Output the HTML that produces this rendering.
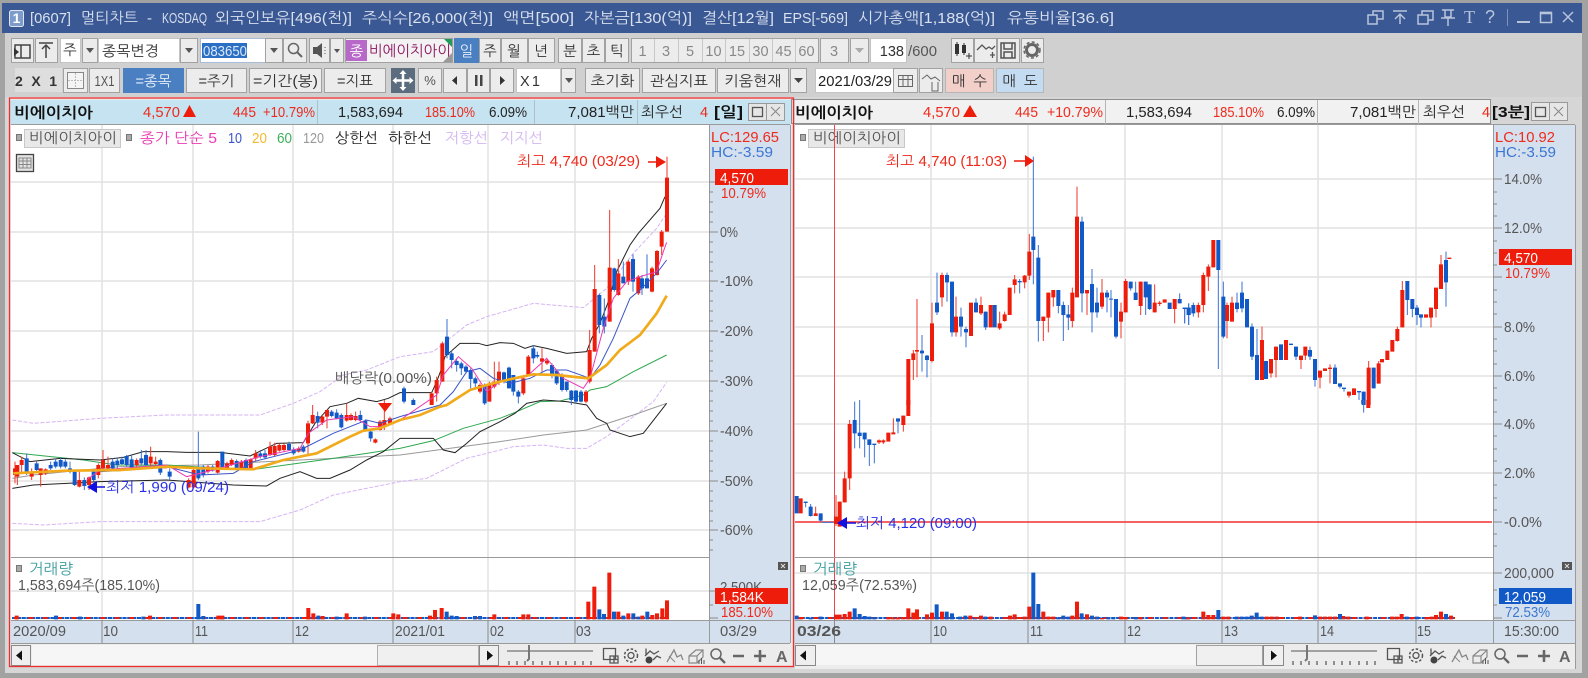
<!DOCTYPE html>
<html lang="ko"><head><meta charset="utf-8"><title>멀티차트</title>
<style>
html,body{margin:0;padding:0;background:#d6d6d6;overflow:hidden}
svg{display:block;filter:blur(.35px)}
text{font-family:"Liberation Sans","NanumGothic","Noto Sans CJK KR",sans-serif;font-size:14.5px;fill:#333}
.c{text-anchor:middle}
.b{fill:#ececec;stroke:#a2a2a2}
.w{fill:#fff;stroke:#c4c4c4}
.tt{fill:#d9e0ee;font-size:15px}
.r{fill:#ee2a1c}.bl{fill:#1f5fd0}.k{fill:#222}.g{fill:#555}.dg{fill:#888}
.bd{font-weight:bold;fill:#111}
.i{fill:none;stroke:#555;stroke-width:1.3}
.ti{fill:none;stroke:#b8c4dc;stroke-width:1.5}
.rw{stroke:#ee3a2a;stroke-width:3;fill:none}.rb{stroke:#ee1c0a;stroke-width:12;fill:none}
.uw{stroke:#3a72d4;stroke-width:3;fill:none}.ub{stroke:#1259c8;stroke-width:12;fill:none}
.l{fill:none;stroke-width:3}
.gr{stroke:#e2e2e2;stroke-width:1.5;fill:none}
.ax{stroke:#8a8a8a;stroke-width:1;fill:none}
</style></head><body>
<svg xmlns="http://www.w3.org/2000/svg" width="1588" height="678" viewBox="0 0 1588 678">
<rect width="1588" height="678" fill="#d6d6d6"/>
<rect x="0" y="0" width="5" height="678" fill="#a2a2a2"/>
<rect x="1582" y="0" width="6" height="678" fill="#a2a2a2"/>
<rect x="0" y="0" width="1588" height="3" fill="#a2a2a2"/>
<rect x="0" y="673" width="1588" height="5" fill="#a2a2a2"/>
<rect x="5" y="33" width="1577" height="64" fill="#d0d0d0"/>
<!-- title -->
<rect x="2" y="3" width="1580" height="30" fill="#3a5894"/>
<rect x="9.5" y="10.500" width="14" height="16" rx="2" fill="#7d9ccb" stroke="#dfe6f2"/>
<text x="16.500" y="23" class="c" style="fill:#fff;font-size:14px;font-weight:bold">1</text>
<text x="30" y="23" class="tt" textLength="41" lengthAdjust="spacingAndGlyphs">[0607]</text>
<text x="81" y="23" class="tt" textLength="57" lengthAdjust="spacingAndGlyphs">멀티차트</text>
<text x="147" y="23" class="tt">-</text>
<text x="162" y="23" class="tt" textLength="45" lengthAdjust="spacingAndGlyphs">KOSDAQ</text>
<text x="215" y="23" class="tt" textLength="137" lengthAdjust="spacingAndGlyphs">외국인보유[496(천)]</text>
<text x="362" y="23" class="tt" textLength="131" lengthAdjust="spacingAndGlyphs">주식수[26,000(천)]</text>
<text x="503" y="23" class="tt" textLength="71" lengthAdjust="spacingAndGlyphs">액면[500]</text>
<text x="584" y="23" class="tt" textLength="108" lengthAdjust="spacingAndGlyphs">자본금[130(억)]</text>
<text x="702" y="23" class="tt" textLength="72" lengthAdjust="spacingAndGlyphs">결산[12월]</text>
<text x="783" y="23" class="tt" textLength="65" lengthAdjust="spacingAndGlyphs">EPS[-569]</text>
<text x="858" y="23" class="tt" textLength="137" lengthAdjust="spacingAndGlyphs">시가총액[1,188(억)]</text>
<text x="1007" y="23" class="tt" textLength="107" lengthAdjust="spacingAndGlyphs">유통비율[36.6]</text>
<path class="ti" d="M1368 15h9v9h-9zM1373 15v-4h10v8h-6M1393 11h14M1400 24v-9M1395 19l5-5 5 5M1418 15h10v9h-10zM1422 15v-4h11v9h-5M1442 10h12M1445 10v7h6v-7M1441 18h14M1448 18v8"/>
<text x="1464" y="23" style="fill:#b8c4dc;font-size:18px;font-family:'Liberation Serif',serif">T</text>
<text x="1485" y="23" style="fill:#b8c4dc;font-size:18px">?</text>
<path d="M1507.500 9v17" stroke="#7f93ba" fill="none"/>
<path d="M1517 22h13" stroke="#b8c4dc" stroke-width="2" fill="none"/>
<rect x="1540.500" y="12.500" width="11" height="10" fill="none" stroke="#b8c4dc" stroke-width="1.500"/><path d="M1540 13h12" stroke="#b8c4dc" stroke-width="2.500"/>
<path class="ti" d="M1563 12l10 10M1573 12l-10 10"/>

<!-- toolbar row 1 -->
<rect class="b" x="11.500" y="38.500" width="22" height="24"/><rect class="b" x="35.500" y="38.500" width="22" height="24"/>
<path d="M15 45h15v13h-15zM21 45v13" fill="none" stroke="#444" stroke-width="1.500"/><path d="M14 48l5 4-5 4z" fill="#333"/>
<path d="M39 43h14M46 58v-13M42 49l4-4 4 4" fill="none" stroke="#444" stroke-width="1.500"/>
<rect class="w" x="60.500" y="38.500" width="20" height="24"/><text x="70" y="55" class="c">주</text>
<rect class="b" x="82.500" y="38.500" width="15" height="24"/><path d="M86 48h8l-4 5z" fill="#555"/>
<rect class="w" x="98.500" y="38.500" width="81" height="24"/><text x="102" y="56" textLength="57" lengthAdjust="spacingAndGlyphs">종목변경</text>
<rect class="b" x="180.500" y="38.500" width="17" height="24"/><path d="M185 48h8l-4 5z" fill="#555"/>
<rect x="200.500" y="38.500" width="65" height="24" fill="#fff" stroke="#a8bbd8"/>
<rect x="202" y="43" width="45" height="15" fill="#2a6fc4"/>
<text x="203" y="56" style="fill:#dbe8f8" textLength="44" lengthAdjust="spacingAndGlyphs">083650</text>
<rect class="b" x="265.500" y="38.500" width="17" height="24"/><path d="M270 48h8l-4 5z" fill="#555"/>
<rect class="b" x="283.500" y="38.500" width="23" height="24"/><circle cx="293.500" cy="48.500" r="5" fill="none" stroke="#666" stroke-width="1.500"/><path d="M297 52l5 5" stroke="#666" stroke-width="2"/>
<rect class="b" x="309.500" y="38.500" width="20" height="24"/><path d="M313 47h4l5-4v15l-5-4h-4z" fill="#555"/><path d="M325 47v1M325 50v1M325 53v1" stroke="#555"/>
<rect class="b" x="330.500" y="38.500" width="13" height="24"/><path d="M334 49h6l-3 4z" fill="#555"/>
<rect x="345.500" y="38.500" width="107" height="24" fill="#f2f2f2" stroke="#a2a2a2"/>
<rect x="346" y="40" width="21" height="21" fill="#b868c8"/><text x="356.500" y="56" class="c" style="fill:#fff">종</text>
<text x="369" y="56" style="fill:#8e1360;font-size:15px" textLength="82" lengthAdjust="spacingAndGlyphs">비에이치아이</text>
<path d="M444 39h8v8z" fill="#1f9a5a"/><path d="M452 53v9h-9z" fill="#999"/>
<rect x="454.500" y="38.500" width="24" height="24" fill="#4a7fc1" stroke="#4a7fc1"/><text x="466.500" y="56" class="c" style="fill:#e6eefa">일</text>
<rect class="b" x="479.500" y="38.500" width="21" height="24"/><text x="490" y="56" class="c">주</text>
<rect class="b" x="501.500" y="38.500" width="26" height="24"/><text x="514" y="56" class="c">월</text>
<rect class="b" x="528.500" y="38.500" width="26" height="24"/><text x="541" y="56" class="c">년</text>
<rect class="b" x="558.500" y="38.500" width="23" height="24"/><text x="570" y="56" class="c">분</text>
<rect class="b" x="582.500" y="38.500" width="22" height="24"/><text x="593.500" y="56" class="c">초</text>
<rect class="b" x="605.500" y="38.500" width="23" height="24"/><text x="617" y="56" class="c">틱</text>
<rect class="b" x="631.500" y="38.500" width="187" height="24"/>
<path d="M654.500 39v23M678.500 39v23M702.500 39v23M725.500 39v23M749.500 39v23M772.500 39v23M795.500 39v23" stroke="#c8c8c8" fill="none"/>
<text x="642.500" y="56" class="c dg">1</text><text x="666" y="56" class="c dg">3</text><text x="690" y="56" class="c dg">5</text><text x="713.500" y="56" class="c dg">10</text><text x="737" y="56" class="c dg">15</text><text x="760.500" y="56" class="c dg">30</text><text x="783.500" y="56" class="c dg">45</text><text x="806.500" y="56" class="c dg">60</text>
<rect class="b" x="820.500" y="38.500" width="28" height="24"/><text x="834" y="56" class="c dg">3</text>
<rect class="b" x="850.500" y="38.500" width="18" height="24"/><path d="M855 48h9l-4.500 5z" fill="#aaa"/>
<rect class="w" x="870.500" y="38.500" width="36" height="24"/><text x="904" y="56" style="text-anchor:end">138</text>
<text x="908" y="56" class="g" textLength="29" lengthAdjust="spacingAndGlyphs">/600</text>
<rect class="b" x="951.500" y="38.500" width="22" height="24"/><rect class="b" x="974.500" y="38.500" width="22" height="24"/><rect class="b" x="997.500" y="38.500" width="22" height="24"/><rect class="b" x="1021.500" y="38.500" width="22" height="24"/>
<path d="M955 44h4v10h-4zM962 45h4v8h-4z" fill="#333"/><path d="M957 42v14M964 43v12M966 56h6M969 53v6" stroke="#333" fill="none"/>
<path d="M977 50l5-5 4 4 3-2 3 2 3-3M990 55h5M992.500 52v6" stroke="#555" fill="none" stroke-width="1.300"/>
<path d="M1001 43h14v15h-14zM1004 43v6h8v-6M1004 58v-6h8v6" fill="none" stroke="#555" stroke-width="1.500"/>
<circle cx="1032" cy="50" r="5.500" fill="none" stroke="#666" stroke-width="3"/><circle cx="1032" cy="50" r="8" fill="none" stroke="#666" stroke-width="1.500" stroke-dasharray="3 2.300"/>

<!-- toolbar row 2 -->
<rect x="15" y="68" width="47" height="24" fill="#dedede"/>
<text x="15" y="86" style="font-weight:bold;font-size:14px" textLength="42" lengthAdjust="spacing">2 X 1</text>
<rect class="b" x="63.500" y="68.500" width="24" height="24"/><rect x="67.500" y="72.500" width="16" height="16" fill="#f4f4f4" stroke="#888"/><path d="M75.500 73v15M68 80.500h15" stroke="#bbb" stroke-dasharray="2 1"/>
<rect class="b" x="89.500" y="68.500" width="30" height="24"/><text x="104.500" y="86" class="c g" textLength="20" lengthAdjust="spacingAndGlyphs">1X1</text>
<rect x="123" y="68" width="61" height="25" fill="#4a7fc1"/><text x="153.500" y="86" class="c" style="fill:#e6eefa" textLength="36" lengthAdjust="spacingAndGlyphs">=종목</text>
<rect class="b" x="186.500" y="68.500" width="60" height="24"/><text x="216.500" y="86" class="c" textLength="36" lengthAdjust="spacingAndGlyphs">=주기</text>
<rect class="b" x="249.500" y="68.500" width="72" height="24"/><text x="285.500" y="86" class="c" textLength="65" lengthAdjust="spacingAndGlyphs">=기간(봉)</text>
<rect class="b" x="324.500" y="68.500" width="61" height="24"/><text x="355" y="86" class="c" textLength="36" lengthAdjust="spacingAndGlyphs">=지표</text>
<rect x="391" y="68" width="24" height="25" fill="#5a6c7e"/><path d="M403 72v17M394.500 80.500h17" stroke="#fff" stroke-width="2.500"/><path d="M403 70l3.500 4h-7zM403 91l3.500-4h-7zM392.500 80.500l4-3.500v7zM413.500 80.500l-4-3.500v7z" fill="#fff"/>
<rect class="b" x="418.500" y="68.500" width="23" height="24"/><text x="430" y="85" class="c g" style="font-size:13px">%</text>
<rect class="b" x="443.500" y="68.500" width="23" height="24"/><path d="M452 80.500l5-4.500v9z" fill="#333"/>
<rect class="b" x="467.500" y="68.500" width="22" height="24"/><path d="M475 75h2.500v11H475zM480 75h2.500v11H480z" fill="#444"/>
<rect class="b" x="490.500" y="68.500" width="23" height="24"/><path d="M505 80.500l-5-4.500v9z" fill="#333"/>
<rect class="w" x="516.500" y="68.500" width="44" height="24"/><text x="520" y="86" textLength="20" lengthAdjust="spacing">X 1</text>
<rect class="b" x="561.500" y="68.500" width="14" height="24"/><path d="M565 78h8l-4 5z" fill="#555"/>
<rect class="b" x="585.500" y="68.500" width="54" height="24"/><text x="612.500" y="86" class="c" textLength="44" lengthAdjust="spacingAndGlyphs">초기화</text>
<rect class="b" x="642.500" y="68.500" width="73" height="24"/><text x="679" y="86" class="c" textLength="58" lengthAdjust="spacingAndGlyphs">관심지표</text>
<rect class="b" x="717.500" y="68.500" width="71" height="24"/><text x="753" y="86" class="c" textLength="57" lengthAdjust="spacingAndGlyphs">키움현재</text>
<rect class="b" x="790.500" y="68.500" width="16" height="24"/><path d="M794 78h9l-4.500 5z" fill="#444"/>
<rect class="w" x="815.500" y="68.500" width="78" height="24"/><text x="818" y="86" textLength="74" lengthAdjust="spacingAndGlyphs" style="fill:#222">2021/03/29</text>
<rect class="b" x="893.500" y="68.500" width="24" height="24"/><path d="M898.500 75.500h14v11h-14zM898.500 79.500h14M903 76v10M908 76v10" fill="none" stroke="#666"/>
<rect class="b" x="919.500" y="68.500" width="23" height="24"/><path d="M922 79l5-4 4 4 4-2 5 4M932 82v9h6v-9" fill="none" stroke="#666"/>
<rect x="945.500" y="68.500" width="48" height="24" fill="#f3cfc9" stroke="#b6b6b6"/><text x="969.500" y="86" class="c" textLength="35" lengthAdjust="spacing">매수</text>
<rect x="996.500" y="68.500" width="47" height="24" fill="#c4dcf2" stroke="#b6b6b6"/><text x="1020" y="86" class="c" textLength="35" lengthAdjust="spacing">매도</text>

<!-- chart panels background -->
<rect x="9" y="97" width="785" height="570" fill="#e9e9e9"/>
<rect x="10" y="100" width="782" height="24" fill="#c5e3f0"/>
<rect x="11" y="125" width="698" height="495" fill="#fff"/>
<rect x="709" y="125" width="81" height="518" fill="#d5e0ee"/>
<rect x="11" y="620" width="698" height="23" fill="#d5e0ee"/>
<rect x="795" y="125" width="698" height="495" fill="#fff"/>
<rect x="1493" y="125" width="82" height="518" fill="#d5e0ee"/>
<rect x="795" y="620" width="698" height="23" fill="#d5e0ee"/>
<rect x="795" y="100" width="695" height="24" fill="#f1f1f1"/>

<!-- grid left -->
<path class="gr" d="M11 182H709M11 232H709M11 281H709M11 331H709M11 381H709M11 431H709M11 481H709M11 530H709M11 591H709M102 125V620M193 125V620M293 125V620M393 125V620M488 125V620M575 125V620"/>
<!-- grid right -->
<path class="gr" d="M795 179H1493M795 228H1493M795 277H1493M795 327H1493M795 376H1493M795 424H1493M795 473H1493M795 573H1493M931 125V620M1028 125V620M1125 125V620M1222 125V620M1318 125V620M1416 125V620"/>

<!-- left lines -->
<g transform="scale(.33333)">
<path class="l" stroke="#d6b4f4" stroke-dasharray="12 5" d="M37 1260L100 1270L300 1255L500 1245L780 1245L880 1210L960 1175L1030 1125L1100 1110L1200 1070L1300 1055L1400 975L1460 950L1600 910L1750 923L1820 865L1900 760L1970 685L2000 640"/>
<path class="l" stroke="#d6b4f4" stroke-dasharray="12 5" d="M37 1570L130 1575L300 1565L780 1565L900 1530L1000 1485L1100 1465L1200 1445L1280 1435L1400 1375L1540 1340L1630 1335L1700 1345L1760 1345L1820 1310L1900 1250L1960 1205L2000 1147"/>
<path class="l" stroke="#999" d="M37 1435L100 1425L200 1415L360 1400L600 1395L900 1380L1200 1365L1500 1325L1630 1305L1700 1297L1760 1290L1900 1245L2000 1210"/>
<path class="l" stroke="#2ea84f" d="M37 1358L250 1380L350 1395L500 1395L750 1410L1000 1375L1100 1360L1200 1345L1300 1322L1390 1285L1500 1255L1550 1235L1620 1205L1680 1203L1750 1185L1770 1170L1820 1160L1900 1115L2000 1065"/>
<path class="l" stroke="#222" d="M37 1358L90 1385L180 1375L300 1380L370 1372L430 1355L500 1355L560 1357L660 1357L750 1368L830 1330L910 1328L945 1270L990 1220L1040 1210L1075 1195L1130 1205L1165 1195L1200 1178L1295 1178L1310 1145L1325 1105L1335 1070L1380 1030L1435 1030L1460 1037L1500 1028L1540 1030L1575 1045L1600 1037L1640 1045L1700 1060L1760 1055L1775 1015L1800 970L1825 905L1850 815L1890 735L1915 700L1980 625L1995 590"/>
<path class="l" stroke="#222" d="M37 1465L100 1455L200 1450L300 1445L500 1440L700 1455L800 1458L840 1435L900 1415L950 1435L990 1435L1050 1410L1100 1380L1150 1355L1200 1315L1300 1315L1330 1350L1365 1358L1400 1330L1440 1295L1500 1265L1545 1240L1580 1210L1630 1200L1700 1205L1760 1215L1790 1255L1820 1270L1830 1290L1890 1310L1930 1300L2000 1210"/>
</g>
<!-- left candles part 1 -->
<g transform="translate(0,400) scale(.33333)">
<path class="rw" d="M45 185V250M52 195V255M65 170V220M95 205V240M122 205V260M137 205V225M238 215V262M267 230V270M295 190V235M309 150V210M324 170V210M410 175V205M452 140V205M467 170V195M566 235V265M581 205V265M624 195V220M653 180V220M681 185V208M695 175V198M724 180V210M752 175V210M767 150V185M810 125V168M824 128V168M838 130V155M852 130V155M896 140V158M924 62V165M938 15V72M967 45V75M981 28V85M1040 10V65M1053 40V62M1067 35V64M1126 115V130M1140 60V92M1153 0V90M1170 50V75"/>
<path class="rb" d="M45 205V225M52 195V230M65 180V195M95 215V230M122 205V225M137 208V220M238 240V260M267 232V255M295 195V225M309 180V205M324 195V205M410 180V195M452 170V190M467 185V192M495 200V205M566 240V262M581 210V262M624 200V215M653 183V218M681 190V205M695 180V195M724 185V207M752 178V207M767 160V175M810 140V165M824 138V165M838 135V152M852 135V150M896 145V155M924 70V130M938 45V70M967 50V68M981 30V50M1040 45V62M1053 45V60M1067 48V60M1126 118V128M1140 65V90M1153 60V80M1170 55V70"/>
<path class="uw" d="M80 160V225M110 185V215M152 185V210M167 175V205M182 172V205M196 178V205M210 185V220M224 210V258M253 232V270M281 210V245M338 175V210M352 172V205M366 170V195M380 165V200M395 165V210M424 150V195M438 150V205M481 175V225M509 205V240M595 95V240M610 195V232M638 195V215M667 155V205M710 178V210M738 175V210M781 150V175M795 150V178M867 125V152M881 142V165M910 135V158M953 35V85M995 30V52M1010 28V58M1024 40V85M1081 32V65M1096 58V95M1112 90V125"/>
<path class="ub" d="M80 175V220M110 190V210M152 195V205M167 185V200M182 180V200M196 185V200M210 205V215M224 215V255M253 240V258M281 215V240M338 185V205M352 182V195M366 178V192M380 168V195M395 178V205M424 175V190M438 165V195M481 180V218M509 215V230M595 205V235M610 200V225M638 200V212M667 155V205M710 183V207M738 180V207M781 160V170M795 160V172M867 132V150M881 148V160M910 140V155M953 48V68M995 35V48M1010 38V55M1024 45V82M1081 45V60M1096 62V92M1112 95V115"/>
</g>
<g transform="translate(400,125) scale(.33333)">
<path class="rw" d="M95 800V840M110 755V830M127 650V770M240 775V805M268 770V830M283 710V790M297 710V780M370 755V810M385 690V750M426 670V740M441 700V720M558 795V835M569 615V775M584 420V680M629 255V590M655 402V512M685 405V480M715 450V510M756 425V502M771 375V452M785 315V390M801 95V320"/>
<path class="rb" d="M95 805V840M110 765V805M127 655V770M240 780V800M268 780V830M283 770V785M297 740V770M370 760V805M385 695V748M426 700V710M441 707V715M558 800V830M569 675V770M584 492V680M629 428V590M655 445V510M685 410V470M715 455V505M756 430V500M771 378V450M785 320V365M801 158V320"/>
<path class="uw" d="M12 785V835M40 820V840M141 582V700M155 675V730M170 700V740M184 710V750M198 720V745M212 730V790M226 755V790M254 775V840M312 740V775M327 725V790M340 750V812M355 795V835M400 660V715M412 680V700M456 715V760M470 735V780M486 745V800M500 770V800M514 795V840M528 795V835M543 795V832M598 505V625M613 520V625M643 428V500M670 410V475M699 388V500M726 450V510M741 388V490"/>
<path class="ub" d="M12 790V830M40 825V840M141 635V690M155 685V705M170 708V720M184 715V730M198 725V740M212 735V762M226 760V775M254 780V835M312 742V770M327 728V790M340 750V800M355 800V815M400 670V700M412 690V695M456 720V750M470 738V775M486 750V795M500 770V795M514 797V825M528 797V830M543 800V830M598 510V600M613 575V605M643 430V495M670 455V475M699 402V470M726 460V490M741 460V490"/>
</g>
<g transform="scale(.33333)">
<path class="l" stroke="#3a55c8" d="M300 1415L360 1412L420 1405L500 1400L600 1425L700 1420L760 1385L900 1350L1000 1300L1100 1260L1140 1270L1200 1250L1320 1215L1360 1175L1400 1115L1440 1105L1480 1135L1530 1150L1590 1135L1640 1110L1700 1110L1770 1135L1800 1095L1840 1015L1890 895L1920 870L1970 820L2000 780"/>
<path class="l" stroke="#e93bb4" d="M260 1440L300 1410L500 1395L560 1430L640 1410L780 1370L900 1345L925 1300L980 1260L1060 1250L1110 1280L1140 1280L1200 1260L1310 1185L1330 1125L1375 1070L1415 1105L1460 1175L1500 1145L1580 1130L1640 1075L1690 1135L1750 1165L1770 1135L1810 985L1840 895L1880 845L1920 830L1970 815L1990 755L2000 727"/>
<path class="l" stroke="#f0aa1a" style="stroke-width:8" d="M40 1420L200 1412L360 1410L500 1400L600 1405L760 1408L850 1380L950 1360L1050 1310L1090 1292L1140 1285L1200 1260L1260 1245L1320 1220L1340 1215L1410 1170L1460 1155L1520 1140L1600 1123L1670 1125L1765 1135L1820 1095L1860 1050L1920 1005L1970 940L2000 887"/>
</g>

<!-- left volume -->
<path d="M12 618H668" stroke="#1259c8" stroke-width="2" stroke-dasharray="4.200 .6" fill="none"/>
<path d="M14 618H668" stroke="#ee1c0a" stroke-width="2" stroke-dasharray="4.800 9.600" fill="none"/>
<!-- right volume baseline -->
<path d="M796 618H1455" stroke="#1259c8" stroke-width="2" stroke-dasharray="4 .85" fill="none"/>
<path d="M799 618H1455" stroke="#ee1c0a" stroke-width="2" stroke-dasharray="4.850 9.700" fill="none"/>
<g transform="translate(0,400) scale(.33333)">
<path class="ub" d="M595 658V612M610 658V648M667 658V648M168 658V647M240 658V650M430 658V650M955 658V647M1010 658V650M1095 658V650"/>
<path class="rb" d="M50 658V647M655 658V647M667 658V647M925 658V624M940 658V640M968 658V648M1040 658V640M1180 658V640M1195 658V643M450 658V647"/>
</g>
<g transform="translate(400,400) scale(.33333)">
<path class="rb" d="M90 658V647M105 658V630M125 658V624M283 658V643M370 658V643M385 658V643M565 658V605M583 658V560M628 658V518M655 658V635M685 658V640M727 658V647M757 658V645M771 658V640M787 658V625M801 658V601"/>
<path class="ub" d="M140 658V635M155 658V647M170 658V648M225 658V648M240 658V648M598 658V628M612 658V642M642 658V635M670 658V647M700 658V640M715 658V650M742 658V635"/>
</g>

<!-- right candles -->
<path d="M795 522H1492" stroke="#f03030" stroke-width="1.500" fill="none"/>
<path d="M834.500 125V620" stroke="#f0454a" stroke-width="1" fill="none"/>
<g transform="translate(780,400) scale(.33333)">
<path class="rw" d="M107 320V348M168 285V378M179 305V380M194 215V307M209 60V270M297 118V132M310 118V132M340 55V100M370 47V95"/>
<path class="rb" d="M62 295V340M107 340V348M168 350V372M179 305V380M194 235V307M209 72V235M297 121V127M310 121V127M325 98V125M340 97V103M370 47V75M385 0V48"/>
<path class="uw" d="M77 305V322M92 312V350M122 340V365M224 5V145M239 0V145M254 98V172M268 118V198M283 133V190M354 55V100M125 367H160"/>
<path class="ub" d="M50 288V340M77 305V309M92 320V348M122 340V362M224 60V100M239 98V108M254 98V118M268 118V135M283 131V135M354 55V65"/>
<path class="ub" d="M50 658V647M92 658V654M122 658V650M224 658V625M239 658V642M254 658V648M268 658V650M283 658V651M470 658V613M500 658V635M516 658V640M540 658V650M556 658V647M585 658V655M616 658V650M760 658V518M775 658V612M835 658V652M850 658V647M865 658V650M905 658V640M921 658V643M936 658V647M951 658V650M985 658V651M1000 658V651M1068 658V651M1220 658V651"/>
<path class="rb" d="M62 658V651M168 658V644M179 658V644M194 658V642M209 658V635M325 658V652M340 658V652M354 658V652M370 658V651M385 658V625M400 658V638M411 658V628M441 658V643M456 658V638M486 658V635M571 658V647M603 658V647M632 658V650M690 658V647M704 658V643M734 658V650M748 658V620M790 658V635M805 658V650M820 658V650M877 658V647M891 658V605M921 658V643M966 658V654M1023 658V650M1037 658V651M1082 658V651"/>
</g>
<g transform="translate(780,125) scale(.33333)">
<path class="rw" d="M385 702V840M400 675V765M411 522V757M456 533V712M486 443V545M528 515V635M603 515V570M659 560V615M674 560V590M704 450V505M734 450V490M748 327V465M790 575V648M805 503V622M820 495V545M877 488V607M891 185V517M921 495V570M966 462V552M1023 533V640M1037 462V562M1082 470V570M1124 478V562M1139 528V543M1184 522V595"/>
<path class="rb" d="M385 702V840M400 685V705M411 675V680M456 595V708M486 450V517M528 575V622M573 533V633M603 540V565M632 540V607M659 595V610M674 568V588M689 488V570M704 463V480M734 452V472M748 380V452M790 575V588M805 503V578M820 495V517M877 503V588M891 275V517M921 495V505M966 503V545M1023 560V590M1037 468V562M1082 470V543M1124 533V562M1139 533V537M1154 523V533M1184 522V552"/>
<path class="uw" d="M426 630V740M441 690V757M471 443V570M501 443V530M516 470V635M543 548V635M558 605V667M588 520V562M617 560V615M719 462V505M760 95V478M775 360V650M835 495V565M850 530V648M865 540V615M906 275V562M936 432V622M951 488V578M981 495V562M993 495V577M1008 522V640M1052 470V497M1067 470V525M1097 470V570M1109 478V555M1199 505V535M1214 550V595M1226 535V600"/>
<path class="ub" d="M426 677V685M441 692V705M471 533V562M501 450V472M516 470V622M543 575V605M558 612V622M588 533V562M617 560V607M644 540V607M719 468V472M760 335V375M775 398V588M835 495V543M850 540V570M865 568V578M906 290V505M936 477V562M951 533V562M981 503V517M993 521V524M1008 522V635M1052 470V490M1067 503V525M1097 470V517M1109 478V552M1169 533V552M1199 522V535M1214 548V552M1226 548V570"/>
</g>
<g transform="translate(1180,125) scale(.33333)">
<path class="rw" d="M55 533V578M70 443V562M85 418V498M141 533V640M156 515V590M246 605V765M273 702V758M288 665V757M363 692V732M376 665V705M420 737V790M450 718V775M507 800V818M566 708V840M596 708V776M652 605V650M667 468V607M753 548V607M768 488V577M783 390V492"/>
<path class="rb" d="M55 540V562M70 450V540M85 425V455M100 345V427M141 540V588M156 533V590M246 645V765M273 702V745M288 665V705M318 645V705M363 692V705M376 665V692M420 737V758M435 730V738M450 728V732M507 800V812M522 790V810M566 728V840M596 715V776M606 702V712M622 677V705M637 645V680M652 612V648M667 495V607M738 568V578M753 548V578M768 488V552M783 418V492M808 398V402"/>
<path class="uw" d="M14 550V595M26 535V600M40 533V575M115 345V732M130 470V640M171 503V562M186 470V562M216 595V705M231 612V765M348 665V705M390 665V705M405 702V785M465 718V777M480 775V790M492 790V800M537 800V825M551 800V840M581 728V790M682 468V570M697 522V577M711 540V600M723 568V607M798 380V545"/>
<path class="ub" d="M14 548V552M26 548V570M40 540V565M115 345V435M130 515V635M171 533V552M186 503V550M201 522V607M216 605V695M231 690V765M258 708V762M303 658V705M333 656V660M348 665V695M390 675V695M405 702V765M465 728V777M480 775V785M492 788V792M537 798V802M551 800V840M581 728V790M682 468V525M697 522V552M711 548V570M723 568V578M798 405V472"/>
</g>
<g transform="translate(1180,400) scale(.33333)">
<path class="rb" d="M550 0V10M565 0V24M25 658V652M70 658V635M85 658V645M100 658V645M130 658V650M145 658V650M215 658V648M260 658V650M275 658V650M290 658V650M360 658V650M420 658V650M435 658V650M450 658V650M465 658V650M490 658V648M505 658V650M560 658V650M636 658V650M650 658V650M665 658V642M695 658V653M740 658V652M755 658V650M768 658V645M783 658V635M813 658V647"/>
<path class="ub" d="M550 0V12M10 658V650M115 658V630M170 658V650M185 658V650M200 658V650M215 658V647M230 658V638M245 658V650M405 658V646M480 658V642M680 658V650M710 658V650M798 658V642"/>
<path class="uw" d="M551 0V38"/>
</g>

<!-- dividers / borders -->
<path d="M11 557.500H709M795 557.500H1493M11 620.500H790M795 620.500H1575M11 643.500H790M795 643.500H1575M11 124.500H790M795 124.500H1575" stroke="#9a9a9a" fill="none"/>
<path d="M709.500 125V643M1493.500 125V643M790.500 125V643M1575.500 125V643" stroke="#9a9a9a" fill="none"/>
<path d="M102 620V643M193 620V643M293 620V643M393 620V643M488 620V643M575 620V643M931 620V643M1028 620V643M1125 620V643M1222 620V643M1318 620V643M1416 620V643M834.500 620V643" stroke="#8a8a8a" fill="none"/>

<!-- axis ticks -->
<path class="ax" d="M709 182h9M709 232h9M709 281h9M709 331h9M709 381h9M709 431h9M709 481h9M709 530h9M709 192h4M709 202h4M709 212h4M709 222h4M709 242h4M709 252h4M709 262h4M709 271h4M709 291h4M709 301h4M709 311h4M709 321h4M709 341h4M709 351h4M709 361h4M709 371h4M709 391h4M709 401h4M709 411h4M709 421h4M709 441h4M709 451h4M709 461h4M709 471h4M709 491h4M709 501h4M709 511h4M709 521h4M709 540h4M709 550h4M709 591h9M709 605h4M709 618h9"/>
<path class="ax" d="M1493 179h9M1493 228h9M1493 277h9M1493 327h9M1493 376h9M1493 424h9M1493 473h9M1493 522h9M1493 573h9M1493 192h4M1493 204h4M1493 216h4M1493 241h4M1493 253h4M1493 265h4M1493 290h4M1493 302h4M1493 314h4M1493 339h4M1493 351h4M1493 364h4M1493 388h4M1493 400h4M1493 412h4M1493 436h4M1493 449h4M1493 461h4M1493 485h4M1493 498h4M1493 510h4M1493 534h4M1493 546h4M1493 590h4M1493 605h4M1493 618h9"/>
<text x="720" y="237" class="g" textLength="18" lengthAdjust="spacingAndGlyphs">0%</text>
<text x="720" y="286" class="g" textLength="33" lengthAdjust="spacingAndGlyphs">-10%</text>
<text x="720" y="336" class="g" textLength="33" lengthAdjust="spacingAndGlyphs">-20%</text>
<text x="720" y="386" class="g" textLength="33" lengthAdjust="spacingAndGlyphs">-30%</text>
<text x="720" y="436" class="g" textLength="33" lengthAdjust="spacingAndGlyphs">-40%</text>
<text x="720" y="486" class="g" textLength="33" lengthAdjust="spacingAndGlyphs">-50%</text>
<text x="720" y="535" class="g" textLength="33" lengthAdjust="spacingAndGlyphs">-60%</text>
<text x="1504" y="184" class="g" textLength="38" lengthAdjust="spacingAndGlyphs">14.0%</text>
<text x="1504" y="233" class="g" textLength="38" lengthAdjust="spacingAndGlyphs">12.0%</text>
<text x="1504" y="332" class="g" textLength="31" lengthAdjust="spacingAndGlyphs">8.0%</text>
<text x="1504" y="381" class="g" textLength="31" lengthAdjust="spacingAndGlyphs">6.0%</text>
<text x="1504" y="429" class="g" textLength="31" lengthAdjust="spacingAndGlyphs">4.0%</text>
<text x="1504" y="478" class="g" textLength="31" lengthAdjust="spacingAndGlyphs">2.0%</text>
<text x="1504" y="527" class="g" textLength="38" lengthAdjust="spacingAndGlyphs">-0.0%</text>
<text x="1504" y="578" class="g" textLength="50" lengthAdjust="spacingAndGlyphs">200,000</text>
<text x="720" y="592" class="g" textLength="42" lengthAdjust="spacingAndGlyphs">2,500K</text>
<text x="711" y="142" class="r" style="font-size:15px" textLength="68" lengthAdjust="spacingAndGlyphs">LC:129.65</text>
<text x="711" y="157" class="bl" style="font-size:15px;fill:#3a76d4" textLength="62" lengthAdjust="spacingAndGlyphs">HC:-3.59</text>
<text x="1495" y="142" class="r" style="font-size:15px" textLength="60" lengthAdjust="spacingAndGlyphs">LC:10.92</text>
<text x="1495" y="157" class="bl" style="font-size:15px;fill:#3a76d4" textLength="61" lengthAdjust="spacingAndGlyphs">HC:-3.59</text>
<rect x="715" y="169" width="73" height="16" fill="#ee1c0a"/><text x="720" y="183" style="fill:#fff" textLength="34" lengthAdjust="spacingAndGlyphs">4,570</text>
<text x="721" y="198" class="r" textLength="45" lengthAdjust="spacingAndGlyphs">10.79%</text>
<rect x="1499" y="249" width="73" height="16" fill="#ee1c0a"/><text x="1504" y="263" style="fill:#fff" textLength="34" lengthAdjust="spacingAndGlyphs">4,570</text>
<text x="1505" y="278" class="r" textLength="45" lengthAdjust="spacingAndGlyphs">10.79%</text>
<rect x="715" y="588" width="73" height="16" fill="#ee1c0a"/><text x="720" y="602" style="fill:#fff" textLength="44" lengthAdjust="spacingAndGlyphs">1,584K</text>
<text x="721" y="617" class="r" textLength="52" lengthAdjust="spacingAndGlyphs">185.10%</text>
<rect x="1499" y="588" width="73" height="16" fill="#1259c8"/><text x="1504" y="602" style="fill:#fff" textLength="42" lengthAdjust="spacingAndGlyphs">12,059</text>
<text x="1505" y="617" class="bl" style="fill:#3a76d4" textLength="45" lengthAdjust="spacingAndGlyphs">72.53%</text>
<rect x="778" y="562" width="10" height="8" fill="#555"/><path d="M781 564l4 4M785 564l-4 4" stroke="#ddd"/>
<rect x="1562" y="562" width="10" height="8" fill="#555"/><path d="M1565 564l4 4M1569 564l-4 4" stroke="#ddd"/>

<!-- time axis labels -->
<text x="13" y="636" class="g" textLength="53" lengthAdjust="spacingAndGlyphs">2020/09</text>
<text x="103" y="636" class="g" textLength="15" lengthAdjust="spacingAndGlyphs">10</text>
<text x="195" y="636" class="g" textLength="13" lengthAdjust="spacingAndGlyphs">11</text>
<text x="295" y="636" class="g" textLength="14" lengthAdjust="spacingAndGlyphs">12</text>
<text x="395" y="636" class="g" textLength="50" lengthAdjust="spacingAndGlyphs">2021/01</text>
<text x="490" y="636" class="g" textLength="14" lengthAdjust="spacingAndGlyphs">02</text>
<text x="576" y="636" class="g" textLength="15" lengthAdjust="spacingAndGlyphs">03</text>
<text x="720" y="636" class="g" textLength="37" lengthAdjust="spacingAndGlyphs">03/29</text>
<text x="797" y="636" class="g" style="font-weight:bold" textLength="44" lengthAdjust="spacingAndGlyphs">03/26</text>
<text x="933" y="636" class="g" textLength="14" lengthAdjust="spacingAndGlyphs">10</text>
<text x="1030" y="636" class="g" textLength="13" lengthAdjust="spacingAndGlyphs">11</text>
<text x="1127" y="636" class="g" textLength="14" lengthAdjust="spacingAndGlyphs">12</text>
<text x="1224" y="636" class="g" textLength="14" lengthAdjust="spacingAndGlyphs">13</text>
<text x="1320" y="636" class="g" textLength="14" lengthAdjust="spacingAndGlyphs">14</text>
<text x="1417" y="636" class="g" textLength="14" lengthAdjust="spacingAndGlyphs">15</text>
<text x="1504" y="636" class="g" textLength="55" lengthAdjust="spacingAndGlyphs">15:30:00</text>

<!-- legend -->
<rect x="16.500" y="134.500" width="5" height="6" fill="#aaa" stroke="#777"/>
<rect x="24.500" y="129.500" width="96" height="18" fill="#e8e8e8" stroke="#c8c8c8"/>
<text x="29" y="143" class="g" textLength="88" lengthAdjust="spacingAndGlyphs">비에이치아이</text>
<rect x="126.500" y="134.500" width="5" height="6" fill="#aaa" stroke="#777"/>
<text x="140" y="143" style="fill:#e93bb4" textLength="77" lengthAdjust="spacingAndGlyphs">종가 단순 5</text>
<text x="228" y="143" style="fill:#3a55c8" textLength="14" lengthAdjust="spacingAndGlyphs">10</text>
<text x="252" y="143" style="fill:#f5b82e" textLength="15" lengthAdjust="spacingAndGlyphs">20</text>
<text x="277" y="143" style="fill:#3cb05a" textLength="15" lengthAdjust="spacingAndGlyphs">60</text>
<text x="303" y="143" style="fill:#999" textLength="21" lengthAdjust="spacingAndGlyphs">120</text>
<text x="335" y="143" class="k" textLength="43" lengthAdjust="spacingAndGlyphs">상한선</text>
<text x="388" y="143" class="k" textLength="44" lengthAdjust="spacingAndGlyphs">하한선</text>
<text x="445" y="143" style="fill:#d2b6f2" textLength="43" lengthAdjust="spacingAndGlyphs">저항선</text>
<text x="500" y="143" style="fill:#d2b6f2" textLength="43" lengthAdjust="spacingAndGlyphs">지지선</text>
<rect x="16.500" y="154.500" width="17" height="17" fill="#e4e4e4" stroke="#444" stroke-width="1.300"/>
<path d="M19 158h12v10H19zM19 161h12M19 164.500h12M23 158v10M27 158v10" fill="none" stroke="#888"/>
<rect x="800.500" y="134.500" width="5" height="6" fill="#aaa" stroke="#777"/>
<rect x="808.500" y="129.500" width="96" height="18" fill="#e8e8e8" stroke="#c8c8c8"/>
<text x="813" y="143" class="g" textLength="88" lengthAdjust="spacingAndGlyphs">비에이치아이</text>
<path d="M834.500 125V148" stroke="#f0454a" fill="none"/>

<!-- annotations -->
<text x="517" y="166" class="r" textLength="123" lengthAdjust="spacingAndGlyphs">최고 4,740 (03/29)</text>
<path d="M648 162h10" stroke="#ee1c0a" stroke-width="1.500"/><path d="M656 156l10 6-10 6z" fill="#ee1c0a"/>
<text x="335" y="383" class="g" textLength="97" lengthAdjust="spacingAndGlyphs">배당락(0.00%)</text>
<path d="M378 403h14l-7 9z" fill="#ee1c0a"/>
<text x="106" y="492" style="fill:#2a30e8" textLength="123" lengthAdjust="spacingAndGlyphs">최저 1,990 (09/24)</text>
<path d="M95 487h10" stroke="#1010e0" stroke-width="1.500"/><path d="M97 481l-10 6 10 6z" fill="#1010e0"/>
<text x="886" y="166" class="r" textLength="121" lengthAdjust="spacingAndGlyphs">최고 4,740 (11:03)</text>
<path d="M1014 161h12" stroke="#ee1c0a" stroke-width="1.500"/><path d="M1025 155l9 6-9 6z" fill="#ee1c0a"/>
<text x="856" y="528" style="fill:#2a30e8" textLength="121" lengthAdjust="spacingAndGlyphs">최저 4,120 (09:00)</text>
<path d="M845 523h11" stroke="#1010e0" stroke-width="1.500"/><path d="M847 517l-10 6 10 6z" fill="#1010e0"/>

<!-- volume labels -->
<rect x="16.500" y="565.500" width="5" height="6" fill="#aaa" stroke="#777"/>
<text x="29" y="574" style="fill:#3a9c9c;font-size:15px" textLength="44" lengthAdjust="spacingAndGlyphs">거래량</text>
<text x="18" y="590" class="g" textLength="142" lengthAdjust="spacingAndGlyphs">1,583,694주(185.10%)</text>
<rect x="800.500" y="565.500" width="5" height="6" fill="#aaa" stroke="#777"/>
<text x="813" y="574" style="fill:#3a9c9c;font-size:15px" textLength="44" lengthAdjust="spacingAndGlyphs">거래량</text>
<text x="802" y="590" class="g" textLength="115" lengthAdjust="spacingAndGlyphs">12,059주(72.53%)</text>

<!-- headers -->
<text x="14" y="118" class="bd" style="font-size:15px" textLength="79" lengthAdjust="spacingAndGlyphs">비에이치아</text>
<text x="143" y="117" class="r" textLength="37" lengthAdjust="spacingAndGlyphs">4,570</text><path d="M183 117l6.500-12 6.500 12z" fill="#ee1c0a"/>
<text x="233" y="117" class="r" textLength="23" lengthAdjust="spacingAndGlyphs">445</text>
<text x="263" y="117" class="r" textLength="52" lengthAdjust="spacingAndGlyphs">+10.79%</text>
<text x="338" y="117" class="k" textLength="65" lengthAdjust="spacingAndGlyphs">1,583,694</text>
<text x="425" y="117" class="r" textLength="50" lengthAdjust="spacingAndGlyphs">185.10%</text>
<text x="489" y="117" class="k" textLength="38" lengthAdjust="spacingAndGlyphs">6.09%</text>
<text x="568" y="117" class="k" textLength="66" lengthAdjust="spacingAndGlyphs">7,081백만</text>
<text x="641" y="117" class="k" textLength="42" lengthAdjust="spacingAndGlyphs">최우선</text>
<text x="700" y="117" class="r">4</text>
<text x="714" y="117" class="bd" textLength="29" lengthAdjust="spacingAndGlyphs">[일]</text>
<path d="M317.500 100v24M534.500 100v24M637.500 100v24" stroke="#aebfc8" fill="none"/>
<rect x="748.500" y="103.500" width="18" height="17" fill="#e6e6e6" stroke="#999"/><rect x="752.500" y="107.500" width="10" height="9" fill="none" stroke="#555" stroke-width="1.300"/>
<rect x="766.500" y="103.500" width="18" height="17" fill="#e6e6e6" stroke="#999"/><path d="M771 107l9 9M780 107l-9 9" stroke="#888" fill="none"/>
<text x="795" y="118" class="bd" style="font-size:15px" textLength="78" lengthAdjust="spacingAndGlyphs">비에이치아</text>
<text x="923" y="117" class="r" textLength="37" lengthAdjust="spacingAndGlyphs">4,570</text><path d="M963 117l7-12 7 12z" fill="#ee1c0a"/>
<text x="1015" y="117" class="r" textLength="23" lengthAdjust="spacingAndGlyphs">445</text>
<text x="1047" y="117" class="r" textLength="56" lengthAdjust="spacingAndGlyphs">+10.79%</text>
<text x="1126" y="117" class="k" textLength="66" lengthAdjust="spacingAndGlyphs">1,583,694</text>
<text x="1213" y="117" class="r" textLength="51" lengthAdjust="spacingAndGlyphs">185.10%</text>
<text x="1277" y="117" class="k" textLength="38" lengthAdjust="spacingAndGlyphs">6.09%</text>
<text x="1350" y="117" class="k" textLength="66" lengthAdjust="spacingAndGlyphs">7,081백만</text>
<text x="1423" y="117" class="k" textLength="42" lengthAdjust="spacingAndGlyphs">최우선</text>
<text x="1482" y="117" class="r">4</text>
<rect x="791.500" y="99.500" width="699" height="24" fill="none" stroke="#8e8e8e"/>
<path d="M1105.500 100v24M1317.500 100v24M1418.500 100v24" stroke="#b5b5b5" fill="none"/>
<text x="1492" y="117" class="bd" textLength="38" lengthAdjust="spacingAndGlyphs">[3분]</text>
<rect x="1531.500" y="102.500" width="18" height="18" fill="#e6e6e6" stroke="#999"/><rect x="1535.500" y="107.500" width="10" height="9" fill="none" stroke="#555" stroke-width="1.300"/>
<rect x="1549.500" y="102.500" width="18" height="18" fill="#e6e6e6" stroke="#999"/><path d="M1554 107l9 9M1563 107l-9 9" stroke="#888" fill="none"/>

<!-- scroll bars -->
<rect x="11" y="644" width="779" height="22" fill="#ececec"/>
<rect x="795" y="644" width="780" height="25" fill="#ececec"/>
<rect x="32" y="645" width="345" height="20" fill="#f6f6f6"/>
<rect x="816" y="645" width="380" height="20" fill="#f6f6f6"/>
<rect x="11.500" y="645.500" width="19" height="20" fill="#efefef" stroke="#888"/><path d="M16 655.500l6-5v10z" fill="#111"/>
<rect x="377.500" y="645.500" width="101" height="20" fill="#f0f0f0" stroke="#b0b0b0"/>
<rect x="479.500" y="645.500" width="19" height="20" fill="#efefef" stroke="#888"/><path d="M493 655.500l-6-5v10z" fill="#111"/>
<rect x="795.500" y="645.500" width="20" height="20" fill="#efefef" stroke="#888"/><path d="M800 655.500l6-5v10z" fill="#111"/>
<rect x="1196.500" y="645.500" width="66" height="20" fill="#f0f0f0" stroke="#a0a0a0"/>
<rect x="1263.500" y="645.500" width="20" height="20" fill="#efefef" stroke="#888"/><path d="M1277 655.500l-6-5v10z" fill="#111"/>
<!-- sliders -->
<path d="M507 651h86" stroke="#888" stroke-width="1.500"/><path d="M529 645v14l-2 2" stroke="#777" stroke-width="2" fill="none"/>
<path d="M509 661v4M517 661v4M525 661v4M533 661v4M542 661v4M550 661v4M558 661v4M566 661v4M575 661v4M583 661v4M591 661v4" stroke="#333" fill="none"/>
<path d="M1291 651h86" stroke="#888" stroke-width="1.500"/><path d="M1307 645v14l-2 2" stroke="#777" stroke-width="2" fill="none"/>
<path d="M1293 661v4M1301 661v4M1309 661v4M1317 661v4M1326 661v4M1334 661v4M1342 661v4M1350 661v4M1359 661v4M1367 661v4M1375 661v4" stroke="#333" fill="none"/>
<g transform="translate(603,648)">
<path class="i" d="M.5 .5h12v11H.5zM7 8h8v7H7zM11 8v7M7 11.500h8"/>
<circle class="i" cx="28" cy="7.500" r="3"/><circle cx="28" cy="7.500" r="6.500" fill="none" stroke="#555" stroke-width="1.500" stroke-dasharray="2.500 1.800"/>
<path class="i" d="M42 8l5-5 4 3 5-3M43 .5v6M50 12l4-4 4 2"/><circle cx="46" cy="12" r="3.500" fill="#444"/>
<path d="M64 14l7-12 3 7 4-2 2 5" fill="none" stroke="#888" stroke-width="1.300"/><path d="M66 8l6 6" stroke="#888"/>
<path d="M86 8l7-6h7v7l-6 6h-8zM86 8h8v7M94 8l6-6" fill="none" stroke="#888" stroke-width="1.200"/><path d="M96 12v4M98.500 10v6M101 12v4" stroke="#555"/>
<circle cx="113" cy="6" r="5" fill="none" stroke="#666" stroke-width="1.500"/><path d="M117 10l5 5" stroke="#666" stroke-width="2.300"/>
<path d="M130 8h11M151 8h12M157 2v12" stroke="#666" stroke-width="2.500"/>
<text x="173" y="14" style="font-size:16px;font-weight:bold;fill:#666">A</text>
</g>
<g transform="translate(1387,648)">
<path class="i" d="M.5 .5h12v11H.5zM7 8h8v7H7zM11 8v7M7 11.500h8"/>
<circle class="i" cx="29" cy="7.500" r="3"/><circle cx="29" cy="7.500" r="6.500" fill="none" stroke="#555" stroke-width="1.500" stroke-dasharray="2.500 1.800"/>
<path class="i" d="M43 8l5-5 4 3 5-3M44 .5v6M51 12l4-4 4 2"/><circle cx="47" cy="12" r="3.500" fill="#444"/>
<path d="M65 14l7-12 3 7 4-2 2 5" fill="none" stroke="#888" stroke-width="1.300"/><path d="M67 8l6 6" stroke="#888"/>
<path d="M86 8l7-6h7v7l-6 6h-8zM86 8h8v7M94 8l6-6" fill="none" stroke="#888" stroke-width="1.200"/><path d="M96 12v4M98.500 10v6M101 12v4" stroke="#555"/>
<circle cx="113" cy="6" r="5" fill="none" stroke="#666" stroke-width="1.500"/><path d="M117 10l5 5" stroke="#666" stroke-width="2.300"/>
<path d="M130 8h11M151 8h12M157 2v12" stroke="#666" stroke-width="2.500"/>
<text x="172" y="14" style="font-size:16px;font-weight:bold;fill:#666">A</text>
</g>
<!-- red frame -->
<rect x="9.500" y="98" width="784" height="568.500" fill="none" stroke="#ee2d2d" stroke-width="1.300"/>
<rect x="1575" y="125" width="1" height="544" fill="#9a9a9a"/>
</svg>
</body></html>
